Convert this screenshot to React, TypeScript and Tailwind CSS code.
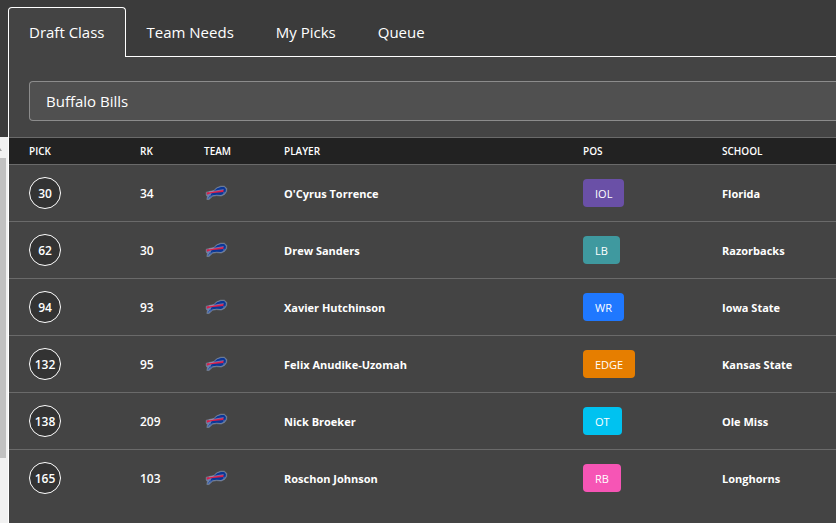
import React, { useState } from "react";

type Pick = {
  pick: number;
  rank: number;
  player: string;
  pos: string;
  color: string;
  school: string;
};

const picks: Pick[] = [
  { pick: 30, rank: 34, player: "O'Cyrus Torrence", pos: "IOL", color: "bg-[#6a50a7]", school: "Florida" },
  { pick: 62, rank: 30, player: "Drew Sanders", pos: "LB", color: "bg-[#3f999f]", school: "Razorbacks" },
  { pick: 94, rank: 93, player: "Xavier Hutchinson", pos: "WR", color: "bg-[#1f78ff]", school: "Iowa State" },
  { pick: 132, rank: 95, player: "Felix Anudike-Uzomah", pos: "EDGE", color: "bg-[#e67e00]", school: "Kansas State" },
  { pick: 138, rank: 209, player: "Nick Broeker", pos: "OT", color: "bg-[#00c2f0]", school: "Ole Miss" },
  { pick: 165, rank: 103, player: "Roschon Johnson", pos: "RB", color: "bg-[#f655b5]", school: "Longhorns" },
];

const tabs = ["Draft Class", "Team Needs", "My Picks", "Queue"];

function BillsLogo() {
  return (
    <svg viewBox="0 0 24 24" className="block size-6" role="img" aria-label="Buffalo Bills">
      <path
        d="M2.2 11.2 10 9.4 12.6 6.8 16.6 5.2 20.4 5.2 22.8 7.4 22.6 10.6 20.6 13.4 17.2 15 12.6 14.6 8.6 15.2 5 18.6 2.8 18.4 3.4 15.8 2.2 14Z"
        fill="#6c82ad"
        stroke="#7c8798"
        strokeWidth="0.6"
        strokeLinejoin="round"
      />
      <path
        d="M10.4 9.6 13.2 7.2 17 5.9 20.2 6 21.9 7.9 21.7 10.4 19.9 12.8 17 14.1 12.6 13.7 8.6 14.2 6.4 15.8 7 13Z"
        fill="#0b3796"
      />
      <path d="M4 17.7 6.4 14.2M6.2 16.2 8.4 14" stroke="#2c56a8" strokeWidth="1" fill="none" />
      <path d="M2.6 11.6 19.6 8.8 19.4 11 7 12.3 3 13.7Z" fill="#d81f49" />
      <path d="M5 11 19.6 8.6" stroke="#b7a9c6" strokeWidth="0.5" fill="none" />
      <path d="m19 12.4 1.6-1.2" stroke="#9db0d2" strokeWidth="0.6" fill="none" />
    </svg>
  );
}

export default function App() {
  const [active, setActive] = useState("Draft Class");
  const [team, setTeam] = useState("Buffalo Bills");

  return (
    <div className="flex min-h-screen bg-[#3b3b3b] font-['Segoe_UI','Open_Sans',sans-serif] text-white">
      <div className="flex w-2 shrink-0 flex-col pt-[137px]" aria-hidden="true">
        <div className="flex-1 bg-[#f1f1f1]">
          <svg viewBox="0 0 8 21" className="block h-[21px] w-2">
            <path d="M0 11 2 14H0Z" fill="#a3a3a3" />
          </svg>
          <div className="h-[300px] w-1.5 bg-[#c1c1c1]" />
        </div>
      </div>

      <div className="flex min-w-0 flex-1 flex-col pt-[7px]">
        <div className="flex" role="tablist">
          {tabs.map((tab) => (
            <button
              key={tab}
              type="button"
              role="tab"
              aria-selected={tab === active}
              onClick={() => setActive(tab)}
              className={
                tab === active
                  ? "h-[50px] rounded-t border border-b-0 border-white bg-[#444] px-5 text-[15px]"
                  : "h-[50px] border-b border-white px-[21px] pt-px text-[15px]"
              }
            >
              {tab}
            </button>
          ))}
          <div className="flex-1 border-b border-white" />
        </div>

        <main className="flex-1 border-l border-white bg-[#444]">
          <div className="pt-6 pb-4 pl-5">
            <select
              aria-label="Team"
              value={team}
              onChange={(e) => setTeam(e.target.value)}
              className="block h-10 w-full appearance-none rounded-l border border-r-0 border-[#8c8c8c] bg-[#505050] px-4 text-[15px] outline-none"
            >
              <option>Buffalo Bills</option>
            </select>
          </div>

          <table className="w-full table-fixed border-collapse text-left text-xs font-semibold">
            <colgroup>
              <col className="w-[111px]" />
              <col className="w-16" />
              <col className="w-20" />
              <col className="w-[299px]" />
              <col className="w-[139px]" />
              <col />
            </colgroup>
            <thead>
              <tr className="h-[27px] border-y border-[#6a6a6a] bg-[#222] text-[10px] uppercase">
                {["Pick", "Rk", "Team", "Player", "Pos", "School"].map((label) => (
                  <th key={label} scope="col" className="p-0 pt-0.5 pl-5 font-semibold">
                    {label}
                  </th>
                ))}
              </tr>
            </thead>
            <tbody>
              {picks.map((p) => (
                <tr key={p.pick} className="h-[57px] border-b border-[#6a6a6a] last:border-b-0">
                  <td className="p-0 pl-5">
                    <span className="flex size-8 items-center justify-center rounded-full border border-white bg-[#333] pt-0.5">
                      {p.pick}
                    </span>
                  </td>
                  <td className="p-0 pt-0.5 pl-5">{p.rank}</td>
                  <td className="p-0 pl-5">
                    <BillsLogo />
                  </td>
                  <td className="p-0 pt-0.5 pl-5 text-[11px] font-bold">{p.player}</td>
                  <td className="p-0 pl-5">
                    <span
                      className={`inline-flex h-7 items-center rounded px-3 pt-0.5 align-middle text-[11px] font-normal ${p.color}`}
                    >
                      {p.pos}
                    </span>
                  </td>
                  <td className="p-0 pt-0.5 pl-5 text-[11px] font-bold">{p.school}</td>
                </tr>
              ))}
            </tbody>
          </table>
        </main>
      </div>
    </div>
  );
}
